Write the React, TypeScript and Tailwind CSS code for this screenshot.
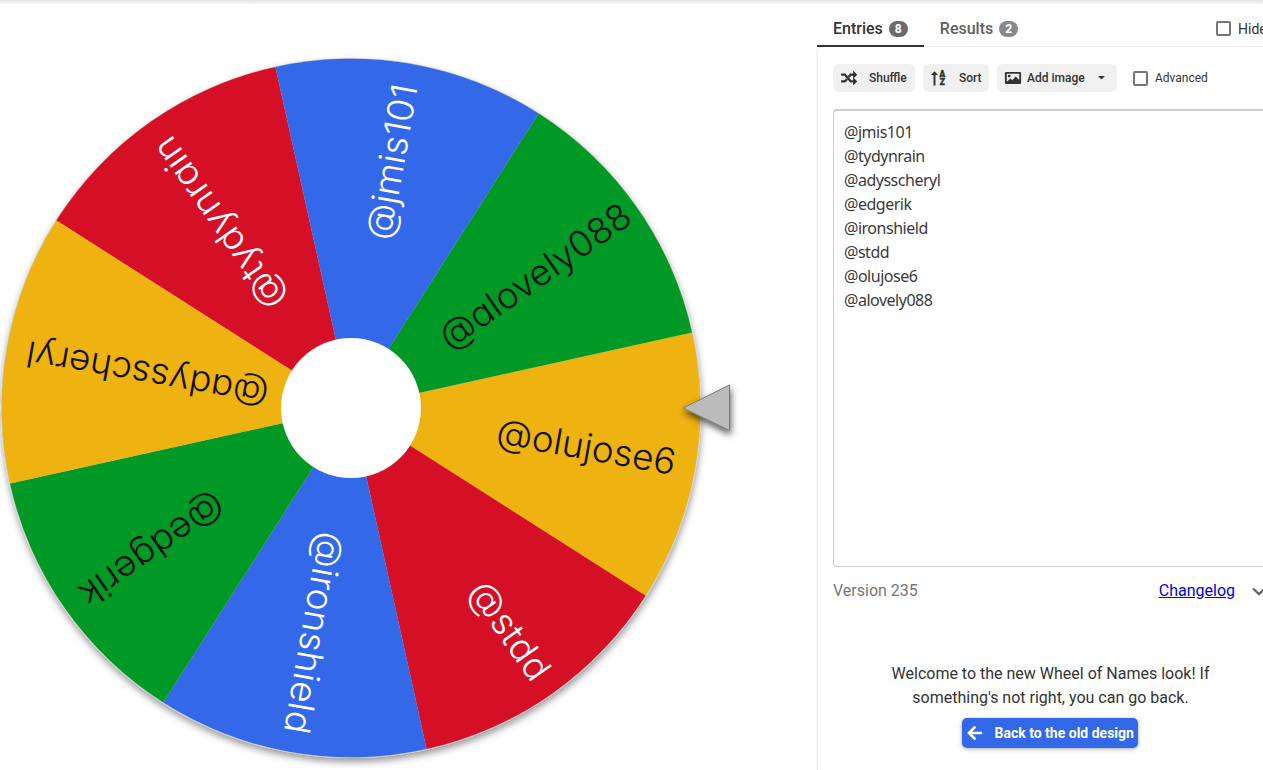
interface Slice {
  name: string;
  fill: string;
  ink: string;
  // distance from the hub centre where the label starts and ends
  from: number;
  to: number;
}

const BLUE = "#3369e8";
const GREEN = "#009925";
const YELLOW = "#eeb211";
const RED = "#d50f25";

const CENTER_X = 351;
const CENTER_Y = 408;
const RADIUS = 349.3;
const HUB_RADIUS = 70;
const START_ANGLE = -12.5;

// clockwise, starting with the slice under the pointer
const slices: Slice[] = [
  { name: "@olujose6", fill: YELLOW, ink: "#111", from: 148, to: 329 },
  { name: "@stdd", fill: RED, ink: "#fff", from: 217, to: 330 },
  { name: "@ironshield", fill: BLUE, ink: "#fff", from: 126, to: 330 },
  { name: "@edgerik", fill: GREEN, ink: "#111", from: 160, to: 329 },
  { name: "@adysscheryl", fill: YELLOW, ink: "#111", from: 84, to: 329 },
  { name: "@tydynrain", fill: RED, ink: "#fff", from: 126, to: 328 },
  { name: "@jmis101", fill: BLUE, ink: "#fff", from: 171, to: 328 },
  { name: "@alovely088", fill: GREEN, ink: "#111", from: 114, to: 339 },
];

const entries = [
  "@jmis101",
  "@tydynrain",
  "@adysscheryl",
  "@edgerik",
  "@ironshield",
  "@stdd",
  "@olujose6",
  "@alovely088",
];

function pointOn(angle: number) {
  const rad = (angle * Math.PI) / 180;
  return `${CENTER_X + RADIUS * Math.cos(rad)},${CENTER_Y + RADIUS * Math.sin(rad)}`;
}

function Wheel() {
  const step = 360 / slices.length;

  return (
    <svg width="800" height="770" viewBox="0 0 800 770" className="block shrink-0">
      <defs>
        <filter id="wheelShadow" x="-10%" y="-10%" width="120%" height="120%">
          <feDropShadow dx="0.5" dy="4" stdDeviation="3.5" floodColor="#000" floodOpacity="0.4" />
        </filter>
        <filter id="pointerShadow" x="-40%" y="-40%" width="180%" height="180%">
          <feDropShadow dx="1" dy="4" stdDeviation="3.5" floodColor="#000" floodOpacity="0.65" />
        </filter>
      </defs>
      <circle
        cx={CENTER_X}
        cy={CENTER_Y}
        r={RADIUS + 0.8}
        fill="#d0d0cc"
        filter="url(#wheelShadow)"
      />
      {slices.map((s, i) => {
        const a = START_ANGLE + i * step;
        return (
          <path
            key={s.name}
            d={`M${CENTER_X},${CENTER_Y} L${pointOn(a)} A${RADIUS},${RADIUS} 0 0 1 ${pointOn(a + step)} Z`}
            fill={s.fill}
          />
        );
      })}
      {slices.map((s, i) => (
        <text
          key={s.name}
          x={CENTER_X + s.from}
          y={CENTER_Y + 10}
          transform={`rotate(${START_ANGLE + (i + 0.5) * step} ${CENTER_X} ${CENTER_Y})`}
          textLength={s.to - s.from}
          lengthAdjust="spacingAndGlyphs"
          fill={s.ink}
          className="font-['Inter',sans-serif] text-[36px] font-[260] [font-feature-settings:'cv11']"
        >
          {s.name}
        </text>
      ))}
      <circle cx={CENTER_X} cy={CENTER_Y} r={HUB_RADIUS} fill="#fff" />
      <path
        d="M683,408 L729.5,385 V430.5 Z"
        fill="#bbb"
        stroke="#777"
        strokeWidth="1"
        filter="url(#pointerShadow)"
      />
    </svg>
  );
}

function ShuffleIcon() {
  return (
    <svg className="w-[18px] h-[18px] shrink-0" viewBox="0 0 24 24" fill="currentColor">
      <path d="M17.500 2L23 7.500 17.500 13V9h-2.300l-2.600 2.600-2.300-2.300L13.600 6h3.900zM1.500 6h5.600l8.100 9h2.300v-4l5.500 5.500-5.500 5.500V18h-3.900L5.700 9H1.500zM5.700 15l2.500-2.500 2.200 2.300L7.100 18H1.500v-3z" />
    </svg>
  );
}

function SortIcon() {
  return (
    <svg className="w-[18px] h-[18px] shrink-0" viewBox="0 0 24 24" fill="currentColor">
      <path d="M4.700 22V8H1.200L6 3l4.800 5H7.300v14z" />
      <g
        stroke="currentColor"
        strokeWidth="0.6"
        className="font-['Roboto',sans-serif] text-[11px] font-black"
      >
        <text x="12.500" y="11">
          A
        </text>
        <text x="13" y="21.500">
          Z
        </text>
      </g>
    </svg>
  );
}

function ImageIcon() {
  return (
    <svg className="w-[18px] h-[18px] shrink-0" viewBox="0 0 24 24" fill="currentColor">
      <path
        fillRule="evenodd"
        d="M3 4h18a1.800 1.800 0 0 1 1.800 1.800v12.400A1.800 1.800 0 0 1 21 20H3a1.800 1.800 0 0 1-1.800-1.800V5.800A1.800 1.800 0 0 1 3 4zm.7 2.400v10.600l4.800-4.500 2.500 2.500 4.500-5 4.800 4.500V6.400zM7 7.500a1.900 1.900 0 1 0 0 3.800 1.900 1.900 0 0 0 0-3.800z"
      />
    </svg>
  );
}

function Checkbox({ label }: { label: string }) {
  return (
    <label className="flex items-center gap-[7px] whitespace-nowrap">
      <span className="w-[15px] h-[15px] rounded-[2px] border-2 border-[#757575] shrink-0" />
      {label}
    </label>
  );
}

function Tab({ label, count, active }: { label: string; count: number; active?: boolean }) {
  return (
    <div
      className={`z-10 flex h-11 items-center gap-1.5 px-4 pt-[9px] text-base font-medium border-b-2 ${
        active ? "text-[#333] border-[#333]" : "text-[#606060] border-transparent"
      }`}
    >
      {label}
      <span
        className={`flex h-4 w-[19px] items-center justify-center rounded-full text-xs font-bold text-white ${
          active ? "bg-[#6b6b6b]" : "bg-[#888]"
        }`}
      >
        {count}
      </span>
    </div>
  );
}

function SidePanel() {
  return (
    <div className="ml-[17px] flex w-[466px] shrink-0 flex-col">
      <div className="z-10 flex h-[43px] items-start justify-between">
        <div className="flex">
          <Tab label="Entries" count={8} active />
          <Tab label="Results" count={2} />
        </div>
        <div className="flex h-[43px] w-[67px] items-center pt-2 text-sm text-[#333]">
          <Checkbox label="Hide" />
        </div>
      </div>

      <div className="flex flex-1 flex-col border-t border-l border-[#eee] rounded-tl-md px-[15px] shadow-[-1px_0_2px_rgba(0,0,0,0.06)]">
        <div className="mt-[17px] flex h-7 items-center gap-2 text-xs font-medium text-[#333]">
          <button className="flex h-7 w-[82px] items-center gap-[11px] rounded-md bg-[#f0f0f0] pl-[7px]">
            <ShuffleIcon />
            Shuffle
          </button>
          <button className="flex h-7 w-[66px] items-center gap-[11px] rounded-md bg-[#f0f0f0] pl-[7px]">
            <SortIcon />
            Sort
          </button>
          <button className="flex h-7 w-[120px] items-center gap-[5px] rounded-md bg-[#f0f0f0] pl-[7px]">
            <ImageIcon />
            Add image
            <svg className="ml-2 w-[7px] h-[3.5px]" viewBox="0 0 8 4" fill="currentColor">
              <path d="M0 0h8L4 4z" />
            </svg>
          </button>
          <div className="ml-2 font-normal">
            <Checkbox label="Advanced" />
          </div>
        </div>

        <div className="mt-[17px] h-[458px] w-[440px] rounded border border-t-2 border-[#ccc] pl-[10px] pt-[9px] font-['Noto_Sans',sans-serif] text-base leading-6 tracking-[-0.48px] text-[#3a3a3a]">
          {entries.map((e) => (
            <div key={e}>{e}</div>
          ))}
        </div>

        <div className="mt-3 flex h-6 items-center text-base">
          <span className="text-[#757575]">Version 235</span>
          <a className="ml-auto text-[#0000ee] underline">Changelog</a>
          <svg
            className="ml-4 mr-px w-4 h-4"
            viewBox="0 0 16 16"
            fill="none"
            stroke="#666"
            strokeWidth="2.4"
          >
            <path d="M2 5.500L8 11.200l6-5.700" />
          </svg>
        </div>

        <div className="mt-[59px] flex flex-col items-center text-base leading-6 text-[#333]">
          <p className="w-[340px] text-center">
            Welcome to the new Wheel of Names look! If something's not right, you can go back.
          </p>
          <button className="mt-2 mr-0.5 flex h-[30px] w-[176px] items-center gap-[11px] whitespace-nowrap rounded-[5px] bg-[#3369e8] pl-1 text-sm font-bold text-white shadow-[0_1px_4px_rgba(0,0,0,0.35)]">
            <svg
              className="w-[18px] h-[18px] shrink-0"
              viewBox="0 0 24 24"
              fill="none"
              stroke="currentColor"
              strokeWidth="3.6"
            >
              <path d="M21.500 12H5M12.500 3.500L4 12l8.500 8.500" />
            </svg>
            Back to the old design
          </button>
        </div>
      </div>
    </div>
  );
}

export default function App() {
  return (
    <div className="flex h-[770px] w-[1263px] flex-col overflow-hidden bg-white font-['Roboto',sans-serif]">
      <div className="h-1 shrink-0 bg-linear-to-b from-[#e4e4e4] to-[#f6f6f6]" />
      <div className="-mt-1 flex h-[770px]">
        <Wheel />
        <div className="flex pt-[3px]">
          <SidePanel />
        </div>
      </div>
    </div>
  );
}
